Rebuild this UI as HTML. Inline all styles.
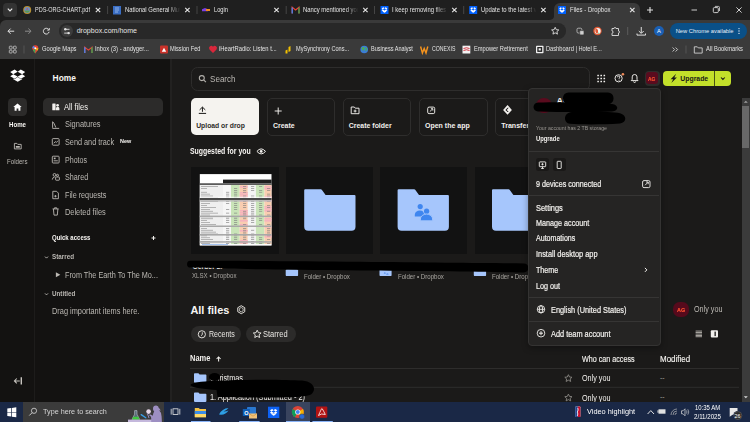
<!DOCTYPE html>
<html><head><meta charset="utf-8">
<style>
*{margin:0;padding:0;box-sizing:border-box}
html,body{width:750px;height:422px;overflow:hidden;background:#1b1a19;font-family:"Liberation Sans",sans-serif;position:relative}
.a{position:absolute}
.t{position:absolute;white-space:nowrap;line-height:10px;height:10px}
svg{position:absolute;overflow:visible}
</style></head><body>
<div class="a" style="left:0px;top:0px;width:750px;height:20px;background:#1f1f1f;"></div>
<div class="a" style="left:3px;top:3px;width:14px;height:13.5px;background:#333333;border-radius:4px;"></div>
<div class="a" style="left:554.4px;top:2.5px;width:85.8px;height:18px;background:#3a3a3a;border-radius:6px 6px 0 0;"></div>
<svg width="750" height="422" style="left:0;top:0">
 <path d="M548.5,20 Q554.4,20 554.4,14.5 L554.4,20 Z" fill="#3a3a3a"/>
 <path d="M646.1,20 Q640.2,20 640.2,14.5 L640.2,20 Z" fill="#3a3a3a"/>
 <path d="M7.8,8.6 L10,10.8 L12.2,8.6" stroke="#e8e8e8" stroke-width="1.2" fill="none"/>
 <g stroke="#4f4f4f" stroke-width="0.8">
  <line x1="107.6" y1="6" x2="107.6" y2="14"/><line x1="197" y1="6" x2="197" y2="14"/>
  <line x1="286.2" y1="6" x2="286.2" y2="14"/><line x1="374.5" y1="6" x2="374.5" y2="14"/>
  <line x1="463.7" y1="6" x2="463.7" y2="14"/>
 </g>
 <g stroke="#e2e2e2" stroke-width="1.15"><path d="M95.8,7.8 l4.4,4.4 M100.2,7.8 l-4.4,4.4"/><path d="M185.2,7.8 l4.4,4.4 M189.6,7.8 l-4.4,4.4"/><path d="M274.3,7.8 l4.4,4.4 M278.7,7.8 l-4.4,4.4"/><path d="M363.2,7.8 l4.4,4.4 M367.6,7.8 l-4.4,4.4"/><path d="M452.2,7.8 l4.4,4.4 M456.6,7.8 l-4.4,4.4"/><path d="M541.2,7.8 l4.4,4.4 M545.6,7.8 l-4.4,4.4"/><path d="M630.1,7.8 l4.4,4.4 M634.5,7.8 l-4.4,4.4"/></g>
 <path d="M650,7 v6 M647,10 h6" stroke="#e0e0e0" stroke-width="1.1"/>
 <path d="M691.5,10 h5.5" stroke="#e0e0e0" stroke-width="0.9"/>
 <rect x="713.3" y="7.6" width="5" height="5" rx="1" stroke="#e0e0e0" stroke-width="0.9" fill="none"/>
 <path d="M714.9,6.4 h3.5 a1.1,1.1 0 0 1 1.1,1.1 v3.5" stroke="#e0e0e0" stroke-width="0.8" fill="none"/>
 <path d="M736.4,7.4 l5.2,5.2 M741.6,7.4 l-5.2,5.2" stroke="#e0e0e0" stroke-width="0.9"/>
 <circle cx="27.2" cy="10" r="4" fill="#b8912e"/><circle cx="27.2" cy="10" r="3" fill="#6a8cc8"/><path d="M24.4,10.6 h5.6 a2.9,2.9 0 0 1 -5.6,0z" fill="#5a9a50"/><path d="M26,9.6 l1.2,-1.6 l1.2,1.6z" fill="#d05030"/>
 <rect x="113" y="6" width="8" height="8.5" fill="#3a6ec4"/><path d="M115,8 h4 M115,10 h4 M115,12 h3" stroke="#cfe0ff" stroke-width="0.6"/>
 <path d="M202,9.3 l3,-1.2 l3,1.2 v2 h-6z" fill="#7b3fe4"/><path d="M206,9 h4 v2 h-4z" fill="#f08a24"/>
 <path d="M292.2,13.5 v-6.3 l3.4,2.8 l3.4,-2.8 v6.3" fill="none" stroke="#ea4335" stroke-width="1.2"/><path d="M292.2,13.5 v-6" stroke="#4285f4" stroke-width="1.3"/><path d="M299,13.5 v-6" stroke="#34a853" stroke-width="1.3"/>
 <g fill="#0061fe"><rect x="380.5" y="6" width="8" height="8" rx="0.6"/><rect x="469.2" y="6" width="8" height="8" rx="0.6"/><rect x="558" y="6" width="8" height="8" rx="0.6"/></g>
<path transform="translate(381.60,7.32) scale(0.1429,0.1429)" d="M12 0 L0 7.7 L8.3 14.3 L20.3 6.9z M0 20.8 L12 28.5 L20.3 21.6 L8.3 14.3z M20.3 21.6 L28.6 28.5 L40.6 20.8 L32.3 14.3z M40.6 7.7 L28.6 0 L20.3 6.9 L32.3 14.3z M20.4 23.1 L12 30 L8.4 27.7 V30.3 L20.4 37.5 L32.4 30.3 V27.7 L28.8 30z" fill="#fff"/><path transform="translate(470.30,7.32) scale(0.1429,0.1429)" d="M12 0 L0 7.7 L8.3 14.3 L20.3 6.9z M0 20.8 L12 28.5 L20.3 21.6 L8.3 14.3z M20.3 21.6 L28.6 28.5 L40.6 20.8 L32.3 14.3z M40.6 7.7 L28.6 0 L20.3 6.9 L32.3 14.3z M20.4 23.1 L12 30 L8.4 27.7 V30.3 L20.4 37.5 L32.4 30.3 V27.7 L28.8 30z" fill="#fff"/><path transform="translate(559.10,7.32) scale(0.1429,0.1429)" d="M12 0 L0 7.7 L8.3 14.3 L20.3 6.9z M0 20.8 L12 28.5 L20.3 21.6 L8.3 14.3z M20.3 21.6 L28.6 28.5 L40.6 20.8 L32.3 14.3z M40.6 7.7 L28.6 0 L20.3 6.9 L32.3 14.3z M20.4 23.1 L12 30 L8.4 27.7 V30.3 L20.4 37.5 L32.4 30.3 V27.7 L28.8 30z" fill="#fff"/></svg>
<div class="t" style="left:34.90px;top:5.12px;font-size:7.16px;color:#e3e3e3;transform:scaleX(0.769);transform-origin:0 0;">PDS-ORG-CHART.pdf</div>
<div class="t" style="left:124.60px;top:5.31px;font-size:6.61px;color:#e3e3e3;transform:scaleX(0.893);transform-origin:0 0;width:62px;overflow:hidden;-webkit-mask-image:linear-gradient(90deg,#000 78%,transparent);">National General Mutual</div>
<div class="t" style="left:214.00px;top:5.38px;font-size:6.41px;color:#e3e3e3;transform:scaleX(0.893);transform-origin:0 0;">Login</div>
<div class="t" style="left:303.30px;top:5.31px;font-size:6.61px;color:#e3e3e3;transform:scaleX(0.893);transform-origin:0 0;width:62px;overflow:hidden;-webkit-mask-image:linear-gradient(90deg,#000 78%,transparent);">Nancy mentioned you</div>
<div class="t" style="left:392.30px;top:5.31px;font-size:6.61px;color:#e3e3e3;transform:scaleX(0.893);transform-origin:0 0;width:62px;overflow:hidden;-webkit-mask-image:linear-gradient(90deg,#000 78%,transparent);">I keep removing files</div>
<div class="t" style="left:480.80px;top:5.31px;font-size:6.61px;color:#e3e3e3;transform:scaleX(0.893);transform-origin:0 0;width:62px;overflow:hidden;-webkit-mask-image:linear-gradient(90deg,#000 78%,transparent);">Update to the latest version</div>
<div class="t" style="left:569.60px;top:5.28px;font-size:6.69px;color:#e3e3e3;transform:scaleX(0.893);transform-origin:0 0;">Files - Dropbox</div>
<div class="a" style="left:0px;top:19.5px;width:750px;height:39px;background:#3a3a3a;border-radius:6px 0 0 0;"></div>
<div class="a" style="left:58.8px;top:23px;width:507.6px;height:15.7px;background:#282828;border-radius:7.85px;"></div>
<div class="a" style="left:60.9px;top:25.1px;width:12.2px;height:12.2px;background:#3c3c3c;border-radius:50%;"></div>
<div class="t" style="left:76.70px;top:26.46px;font-size:7.06px;color:#e3e3e3;">dropbox.com/home</div>
<div class="a" style="left:669.5px;top:22.8px;width:77.5px;height:16.1px;background:#0a5088;border-radius:8px;"></div>
<div class="t" style="left:675.70px;top:26.21px;font-size:5.75px;color:#e6eef8;">New Chrome available</div>
<div class="a" style="left:653.8px;top:25.5px;width:10.1px;height:10.1px;background:#1a5fb4;border-radius:50%;"></div>
<div class="t" style="left:657.00px;top:25.99px;font-size:5.80px;color:#fff;">A</div>
<svg width="750" height="422" style="left:0;top:0">
 <g stroke="#e0e0e0" stroke-width="1" fill="none">
  <path d="M8,31.2 h6.2 M8,31.2 l2.6,-2.6 M8,31.2 l2.6,2.6"/>
  <path d="M31,31.2 h-6 M31,31.2 l-2.6,-2.6 M31,31.2 l-2.6,2.6" stroke="#8a8a8a"/>
  <path d="M48.7,29.6 a2.9,2.9 0 1 0 0.4,2.2"/>
  <path d="M49.3,28 v2.1 h-2.1" stroke-width="0.9"/>
  <path d="M64.2,29.3 h5.3 M64.2,33.1 h5.3" stroke-width="0.9"/>
  <path d="M555.2,27.3 l1.1,2.4 l2.5,0.25 l-1.9,1.7 l0.55,2.5 l-2.25,-1.3 l-2.25,1.3 l0.55,-2.5 l-1.9,-1.7 l2.5,-0.25z" stroke-width="0.9"/>
  <rect x="577" y="28.2" width="4.8" height="4.8" rx="1.2" stroke="#b8b8b8" stroke-width="0.9"/>
  <path d="M612,28.5 h2 a1,1 0 0 1 2,0 h2.5 v2.5 a1,1 0 0 1 0,2 v2.5 h-6.5 v-2.3 a1,1 0 0 0 0,-2.2z" stroke-width="0.9"/>
  <path d="M637,33.5 v1.6 h8.5 v-1.6 M641.25,27 v6 M638.8,31 l2.45,2.45 l2.45,-2.45" stroke-width="1"/>
 </g>
 <circle cx="65.3" cy="29.3" r="1.2" fill="#e0e0e0"/><circle cx="68.6" cy="33.1" r="1.2" fill="#e0e0e0"/>
 <rect x="579.7" y="30.6" width="4.3" height="4.3" rx="0.8" fill="#d0d0d0" stroke="#3a3a3a" stroke-width="0.7"/>
 <circle cx="597.5" cy="31" r="4.2" fill="#de5833"/><circle cx="597.7" cy="31" r="3" fill="#f4f4f4"/><path d="M595.6,28.6 q1.8,-0.2 2.4,1.6 q0.4,1.8 -0.6,3.6 q-1.6,-0.6 -2,-2.4 q-0.3,-1.6 0.2,-2.8z" fill="#de5833"/><path d="M597.6,33.2 l1.4,-0.6 l0.3,1.2z" fill="#4caf50"/>
 <line x1="627.7" y1="27" x2="627.7" y2="35" stroke="#666" stroke-width="0.8"/>
 <g fill="#e6eef8"><circle cx="739" cy="28.6" r="0.65"/><circle cx="739" cy="31" r="0.65"/><circle cx="739" cy="33.4" r="0.65"/></g>
 <g fill="none" stroke="#c8c8c8" stroke-width="0.8">
  <rect x="9.3" y="46.2" width="2.8" height="2.8" rx="0.6"/><rect x="13.4" y="46.2" width="2.8" height="2.8" rx="0.6"/>
  <rect x="9.3" y="50.2" width="2.8" height="2.8" rx="0.6"/><rect x="13.4" y="50.2" width="2.8" height="2.8" rx="0.6"/>
 </g>
 <line x1="24" y1="45.5" x2="24" y2="53.5" stroke="#5a5a5a" stroke-width="0.8"/>
 <path d="M35.3,53.5 q-3,-3.6 -3,-5.2 a3,3 0 0 1 6,0 q0,1.6 -3,5.2z" fill="#ea4335"/><path d="M32.3,48.3 a3,3 0 0 1 1.5,-2.6 l1.5,2.6z" fill="#4285f4"/><path d="M35.3,53.5 q-1.5,-1.8 -2.3,-3.2 l2.3,-2z" fill="#34a853"/><path d="M38.3,48.3 q0,1 -1,2.5 l-2,-2.5z" fill="#fbbc04"/><circle cx="35.3" cy="48.3" r="1" fill="#fff"/>
 <path d="M84.8,53 v-5.8 l3.6,2.9 l3.6,-2.9 v5.8" fill="none" stroke="#ea4335" stroke-width="1.2"/><path d="M84.8,53 v-5.8" stroke="#4285f4" stroke-width="1.3"/><path d="M92,53 v-5.8" stroke="#34a853" stroke-width="1.3"/>
 <rect x="160" y="45.5" width="8" height="8" rx="1" fill="#c8322a"/><path d="M161.8,51.8 l2.2,-4 l2.2,4z" fill="#fff"/>
 <path d="M213,53 l-3.5,-3.6 a2,2 0 0 1 3.5,-2.6 a2,2 0 0 1 3.5,2.6z" fill="#d8273b"/>
 <path d="M285.5,53.5 v-3 l2,-1 v4z M288.5,52 v-5 l2,-1 v5z" fill="#f3c100"/>
 <circle cx="364.2" cy="49.5" r="3.8" fill="#3b7dd8"/><path d="M361.5,48 q1.5,-1.5 3,-0.5 q0.5,1.5 -1,2.5 q-1,1 0,2.5" fill="#4caf50"/><path d="M365.5,47 q2,1 1.5,3 l-1.5,1.5z" fill="#4caf50"/>
 <path d="M420.6,46.5 l1.8,6.5 l1.8,-4.5 l1.8,4.5 l1.8,-6.5" fill="none" stroke="#f7941d" stroke-width="1.4"/>
 <rect x="462.5" y="45.7" width="7.8" height="7.8" fill="#f2f2f2"/><path d="M463.5,48.5 q3,-1.5 6,0 M463.5,50.5 q3,-1.5 6,0" stroke="#d0202e" stroke-width="0.9" fill="none"/>
 <rect x="536" y="45.7" width="7.5" height="7.5" rx="0.8" fill="#f0f0f0"/><rect x="537.3" y="47" width="4.9" height="4.9" fill="#222"/><rect x="538.6" y="48.3" width="2.2" height="2.2" fill="#f0f0f0"/>
 <path d="M672.6,47.5 l2,2 l-2,2 M675.6,47.5 l2,2 l-2,2" stroke="#d0d0d0" stroke-width="0.9" fill="none"/>
 <line x1="686" y1="45.5" x2="686" y2="53.5" stroke="#5a5a5a" stroke-width="0.8"/>
 <path d="M694.3,46.8 h3 l1,1.1 h3.9 v5.2 h-7.9z" stroke="#d0d0d0" stroke-width="0.9" fill="none"/>
</svg>
<div class="t" style="left:42.00px;top:44.18px;font-size:6.98px;color:#e3e3e3;transform:scaleX(0.833);transform-origin:0 0;">Google Maps</div>
<div class="t" style="left:95.20px;top:44.18px;font-size:7.00px;color:#e3e3e3;transform:scaleX(0.833);transform-origin:0 0;">Inbox (3) - andyger...</div>
<div class="t" style="left:170.40px;top:44.24px;font-size:6.81px;color:#e3e3e3;transform:scaleX(0.833);transform-origin:0 0;">Mission Fed</div>
<div class="t" style="left:219.30px;top:44.18px;font-size:7.00px;color:#e3e3e3;transform:scaleX(0.833);transform-origin:0 0;">iHeartRadio: Listen t...</div>
<div class="t" style="left:295.80px;top:44.27px;font-size:6.72px;color:#e3e3e3;transform:scaleX(0.833);transform-origin:0 0;">MySynchrony Cons...</div>
<div class="t" style="left:371.00px;top:44.29px;font-size:6.67px;color:#e3e3e3;transform:scaleX(0.833);transform-origin:0 0;">Business Analyst</div>
<div class="t" style="left:473.70px;top:44.21px;font-size:6.89px;color:#e3e3e3;transform:scaleX(0.833);transform-origin:0 0;">Empower Retirement</div>
<div class="t" style="left:546.40px;top:44.23px;font-size:6.84px;color:#e3e3e3;transform:scaleX(0.833);transform-origin:0 0;">Dashboard | Hotel E...</div>
<div class="t" style="left:706.00px;top:44.19px;font-size:6.95px;color:#e3e3e3;transform:scaleX(0.833);transform-origin:0 0;">All Bookmarks</div>
<div class="t" style="left:431.60px;top:44.11px;font-size:7.17px;color:#e3e3e3;transform:scaleX(0.725);transform-origin:0 0;">CONEXIS</div>
<div class="a" style="left:0px;top:58.5px;width:34px;height:344px;background:#131211;"></div>
<div class="a" style="left:33.5px;top:58.5px;width:2px;height:344px;background:#1d1c1b;"></div>
<div class="a" style="left:35px;top:58.5px;width:135px;height:344px;background:#131211;"></div>
<div class="a" style="left:169.8px;top:58.5px;width:2.2px;height:344px;background:#222120;"></div>
<div class="a" style="left:8px;top:97.6px;width:19px;height:18.5px;background:#2c2b2a;border-radius:4.5px;"></div>
<svg width="750" height="422" style="left:0;top:0"><path transform="translate(10.20,69.50) scale(0.3695,0.3251)" d="M12 0 L0 7.7 L8.3 14.3 L20.3 6.9z M0 20.8 L12 28.5 L20.3 21.6 L8.3 14.3z M20.3 21.6 L28.6 28.5 L40.6 20.8 L32.3 14.3z M40.6 7.7 L28.6 0 L20.3 6.9 L32.3 14.3z M20.4 23.1 L12 30 L8.4 27.7 V30.3 L20.4 37.5 L32.4 30.3 V27.7 L28.8 30z" fill="#fff"/>
 <path d="M17.5,103.4 l-4.2,3.5 h1.3 v3.8 h2 v-2.3 h1.8 v2.3 h2 v-3.8 h1.3z" fill="#fff"/>
 <path d="M14.4,143.4 h2.5 l0.9,1 h3.4 v4.5 h-6.8z" stroke="#bbb8b3" stroke-width="0.9" fill="none"/><path d="M15.8,146 h4 v1.8 h-4z" fill="#bbb8b3"/>
 <path d="M21.3,377.2 v7.4" stroke="#c8c5c0" stroke-width="1.4"/><path d="M19.8,380.9 h-5.4 M16.8,378.5 l-2.4,2.4 l2.4,2.4" stroke="#c8c5c0" stroke-width="1.05" fill="none"/>
</svg>
<div class="t" style="left:9.00px;top:119.57px;font-size:6.73px;color:#f7f5f2;font-weight:700;transform:scaleX(0.909);transform-origin:0 0;">Home</div>
<div class="t" style="left:7.20px;top:157.06px;font-size:6.76px;color:#bbb8b3;transform:scaleX(0.909);transform-origin:0 0;">Folders</div>
<div class="t" style="left:52.60px;top:73.48px;font-size:8.42px;color:#f7f5f2;font-weight:700;">Home</div>
<div class="a" style="left:43px;top:98px;width:120px;height:17.6px;background:#2c2b2a;border-radius:5px;"></div>
<svg width="750" height="422" style="left:0;top:0">
 <g fill="#f2f0ed"><rect x="52.3" y="103.6" width="3.3" height="6.6" rx="0.5"/><circle cx="57.6" cy="105.3" r="1.35"/><path d="M55.9,110.2 v-1.6 a1.75,1.75 0 0 1 3.5,0 v1.6z"/></g>
 <g fill="none" stroke="#bbb8b3" stroke-width="0.9">
  <path d="M52.6,127.8 v-6 l1.4,1.4 l1.8,4.3 M52.4,128.4 h6.8"/>
  <rect x="52.3" y="138.6" width="6.8" height="6.6" rx="0.8"/><path d="M53.8,143.2 l1.5,-1.6 l1.1,0.9 l1.6,-1.8"/>
  <rect x="52.3" y="156.2" width="6.8" height="6.8" rx="0.8"/><path d="M53.6,160.8 h4.2"/>
  <circle cx="54.5" cy="174.9" r="1.4"/><path d="M52.3,179.6 q0.2,-2.4 2.2,-2.4"/><rect x="55.6" y="177" width="3.8" height="3.2" rx="0.5"/><circle cx="57.5" cy="175.3" r="1"/>
  <path d="M52.8,191.3 h3.8 l1.8,1.8 v5.6 h-5.6z M54.3,196.2 h2.3 M55.45,195.05 v2.3"/>
  <path d="M52.6,208.9 h6 M54.5,208.7 v-0.9 h2.2 v0.9 M53.4,208.9 l0.6,6.2 h3.3 l0.6,-6.2"/>
  <path d="M45,256.6 l1.5,1.5 l1.5,-1.5" stroke-width="0.95"/>
  <path d="M45,293.4 l1.5,1.5 l1.5,-1.5" stroke-width="0.95"/>
 </g>
 <path d="M53.8,157.6 h1.8 v1.6 h-1.8z" fill="#bbb8b3"/>
 <path d="M151.5,238 h4 M153.5,236 v4" stroke="#f2f0ed" stroke-width="1"/>
 <path d="M55.9,272.3 l4.4,2.5 l-4.4,2.5z" fill="#bbb8b3"/>
</svg>
<div class="t" style="left:64.40px;top:102.03px;font-size:8.87px;color:#f7f5f2;transform:scaleX(0.855);transform-origin:0 0;">All files</div>
<div class="t" style="left:64.60px;top:119.48px;font-size:8.71px;color:#bbb8b3;transform:scaleX(0.855);transform-origin:0 0;">Signatures</div>
<div class="t" style="left:64.60px;top:137.07px;font-size:8.54px;color:#bbb8b3;transform:scaleX(0.855);transform-origin:0 0;">Send and track</div>
<div class="t" style="left:64.60px;top:154.68px;font-size:8.31px;color:#bbb8b3;transform:scaleX(0.855);transform-origin:0 0;">Photos</div>
<div class="t" style="left:64.60px;top:172.17px;font-size:8.42px;color:#bbb8b3;transform:scaleX(0.855);transform-origin:0 0;">Shared</div>
<div class="t" style="left:64.60px;top:189.68px;font-size:8.48px;color:#bbb8b3;transform:scaleX(0.855);transform-origin:0 0;">File requests</div>
<div class="t" style="left:64.60px;top:207.14px;font-size:8.67px;color:#bbb8b3;transform:scaleX(0.855);transform-origin:0 0;">Deleted files</div>
<div class="t" style="left:119.80px;top:135.52px;font-size:5.99px;color:#f7f5f2;font-weight:700;transform:scaleX(0.909);transform-origin:0 0;">New</div>
<div class="t" style="left:51.60px;top:233.01px;font-size:6.91px;color:#f7f5f2;font-weight:700;transform:scaleX(0.870);transform-origin:0 0;">Quick access</div>
<div class="t" style="left:52.00px;top:252.40px;font-size:7.23px;color:#bbb8b3;font-weight:700;transform:scaleX(0.870);transform-origin:0 0;">Starred</div>
<div class="t" style="left:65.30px;top:269.55px;font-size:8.50px;color:#bbb8b3;transform:scaleX(0.855);transform-origin:0 0;">From The Earth To The Mo...</div>
<div class="t" style="left:52.00px;top:289.11px;font-size:7.20px;color:#bbb8b3;font-weight:700;transform:scaleX(0.870);transform-origin:0 0;">Untitled</div>
<div class="t" style="left:52.00px;top:305.71px;font-size:8.63px;color:#bbb8b3;transform:scaleX(0.855);transform-origin:0 0;">Drag important items here.</div>
<div class="a" style="left:190.5px;top:66.6px;width:399px;height:24.2px;background:transparent;border-radius:6.5px;border:1.3px solid #2e2d2c;"></div>
<svg width="750" height="422" style="left:0;top:0"><circle cx="201.8" cy="78.1" r="2.5" stroke="#b5b2ad" stroke-width="1.05" fill="none"/><path d="M203.6,79.9 l2.3,2.3" stroke="#b5b2ad" stroke-width="1.15"/></svg>
<div class="t" style="left:209.60px;top:73.66px;font-size:9.05px;color:#bab7b2;transform:scaleX(0.893);transform-origin:0 0;">Search</div>
<svg width="750" height="422" style="left:0;top:0"><g fill="#f2f0ed"><rect x="597.3" y="74.7" width="1.6" height="1.6" rx="0.3"/><rect x="600.4" y="74.7" width="1.6" height="1.6" rx="0.3"/><rect x="603.5" y="74.7" width="1.6" height="1.6" rx="0.3"/><rect x="597.3" y="77.7" width="1.6" height="1.6" rx="0.3"/><rect x="600.4" y="77.7" width="1.6" height="1.6" rx="0.3"/><rect x="603.5" y="77.7" width="1.6" height="1.6" rx="0.3"/><rect x="597.3" y="80.7" width="1.6" height="1.6" rx="0.3"/><rect x="600.4" y="80.7" width="1.6" height="1.6" rx="0.3"/><rect x="603.5" y="80.7" width="1.6" height="1.6" rx="0.3"/></g>
 <circle cx="618.6" cy="78.3" r="3.6" stroke="#f2f0ed" stroke-width="0.95" fill="none"/>
 <path d="M617.4,77.3 a1.2,1.2 0 1 1 1.6,1.1 v0.7" stroke="#f2f0ed" stroke-width="0.85" fill="none"/><circle cx="619" cy="80.3" r="0.5" fill="#f2f0ed"/>
 <circle cx="622.9" cy="74.3" r="1.3" fill="#f08c5a"/>
 <path d="M631.2,80.6 h6.8 l-1,-1.2 v-2.5 a2.4,2.4 0 0 0 -4.8,0 v2.5z M633.6,81.5 a1,1 0 0 0 2,0" stroke="#f2f0ed" stroke-width="0.95" fill="none"/>
</svg>
<div class="a" style="left:644.5px;top:70.6px;width:15.3px;height:15.2px;background:#2e2d2c;border-radius:4px;"></div>
<div class="a" style="left:646.3px;top:72.4px;width:11.7px;height:11.6px;background:#5a0b1e;border-radius:3px;"></div>
<div class="t" style="left:648.40px;top:73.92px;font-size:5.43px;color:#ff5230;font-weight:700;transform:scaleX(0.909);transform-origin:0 0;-webkit-text-stroke:0.15px #ff5230;">AG</div>
<div class="a" style="left:663.2px;top:70.5px;width:68.3px;height:15.8px;background:#c3e02a;border-radius:4px;"></div>
<div class="a" style="left:714.1px;top:70.5px;width:0.8px;height:15.8px;background:#2a3010;opacity:0.8;"></div>
<svg width="750" height="422" style="left:0;top:0"><path d="M676.2,73.8 l-5.6,5.4 h2.6 l-1.9,3.8 l5.6,-5.4 h-2.6z" fill="#1a1918"/><path d="M721,77.5 l1.9,1.9 l1.9,-1.9" stroke="#1a1918" stroke-width="1.05" fill="none"/></svg>
<div class="t" style="left:680.30px;top:73.92px;font-size:6.88px;color:#1a1918;font-weight:700;">Upgrade</div>
<div class="a" style="left:190.5px;top:97.7px;width:68.5px;height:37.8px;background:#f5f3ef;border-radius:5px;"></div>
<div class="a" style="left:266.7px;top:98px;width:68.7px;height:37.5px;background:transparent;border-radius:5px;border:1px solid #2e2d2c;"></div>
<div class="a" style="left:342.8px;top:98px;width:68.2px;height:37.5px;background:transparent;border-radius:5px;border:1px solid #2e2d2c;"></div>
<div class="a" style="left:419.3px;top:98px;width:68.3px;height:37.5px;background:transparent;border-radius:5px;border:1px solid #2e2d2c;"></div>
<div class="a" style="left:495.3px;top:98px;width:68.5px;height:37.5px;background:transparent;border-radius:5px;border:1px solid #2e2d2c;"></div>
<svg width="750" height="422" style="left:0;top:0">
 <path d="M198.8,113.4 h7.3 M202.45,111.8 v-4.6 M199.6,109.9 l2.85,-2.8 l2.85,2.8" stroke="#1a1918" stroke-width="1" fill="none"/>
 <path d="M278.2,107.5 v7 M274.7,111 h7" stroke="#f2f0ed" stroke-width="0.95"/>
 <path d="M351.2,107 h3.1 l1,1.2 h3.7 v5.5 h-7.8z M355.1,109.6 v2.9 M353.65,111.05 h2.9" stroke="#f2f0ed" stroke-width="0.95" fill="none"/>
 <rect x="427.7" y="107.1" width="7" height="6.5" rx="1.4" stroke="#f2f0ed" stroke-width="0.95" fill="none"/><path d="M429.8,111.6 l2.9,-2.8 M430.9,108.7 h1.9 v1.9" stroke="#f2f0ed" stroke-width="0.9" fill="none"/>
 <path d="M507.5,105 l4.4,4.9 l-4.4,4.8 l-4.4,-4.8z" fill="#f2f0ed"/><path d="M505.4,109.9 l2.1,-2.2 l1.2,0 l-2,2.2 l2,2.2 l-1.2,0z" fill="#1a1918"/>
</svg>
<div class="t" style="left:196.20px;top:120.95px;font-size:6.80px;color:#2e2c2a;font-weight:700;">Upload or drop</div>
<div class="t" style="left:273.00px;top:120.88px;font-size:6.97px;color:#f2f0ed;font-weight:700;">Create</div>
<div class="t" style="left:348.80px;top:120.89px;font-size:6.95px;color:#f2f0ed;font-weight:700;">Create folder</div>
<div class="t" style="left:425.00px;top:120.88px;font-size:7.00px;color:#f2f0ed;font-weight:700;">Open the app</div>
<div class="t" style="left:501.20px;top:120.84px;font-size:7.10px;color:#f2f0ed;font-weight:700;">Transfer</div>
<div class="t" style="left:190.30px;top:146.02px;font-size:8.30px;color:#f7f5f2;font-weight:700;transform:scaleX(0.833);transform-origin:0 0;">Suggested for you</div>
<svg width="750" height="422" style="left:0;top:0"><path d="M256.9,151.4 q4.3,-5 8.6,0 q-4.3,5 -8.6,0z" stroke="#f2f0ed" stroke-width="1" fill="none"/><circle cx="261.2" cy="151.4" r="1.4" fill="#f2f0ed"/></svg>
<div class="a" style="left:191.4px;top:166.6px;width:87.6px;height:87.1px;background:#121212;"></div>
<div class="a" style="left:286.2px;top:166.6px;width:87.1px;height:87.1px;background:#121212;"></div>
<div class="a" style="left:380px;top:166.6px;width:87px;height:87.1px;background:#121212;"></div>
<div class="a" style="left:474.6px;top:166.6px;width:87px;height:87.1px;background:#121212;"></div>
<svg width="750" height="422" style="left:0;top:0"><rect x="199.8" y="174.1" width="71.69999999999999" height="71.30000000000001" fill="#ffffff"/><rect x="199.8" y="185" width="23.19999999999999" height="59.400000000000006" fill="#efefef"/><rect x="223" y="185" width="8" height="59.400000000000006" fill="#f6f6f6"/><rect x="231" y="185" width="8.699999999999989" height="59.2" fill="#c9e4b8"/><rect x="239.7" y="185" width="8.100000000000023" height="59.2" fill="#f9cdb0"/><rect x="247.8" y="185" width="8.099999999999994" height="59.2" fill="#f3f3f3"/><rect x="255.9" y="185" width="8.499999999999972" height="59.2" fill="#c9e4b8"/><rect x="264.4" y="185" width="7.100000000000023" height="59.2" fill="#f9cdb0"/><rect x="239.7" y="186" width="8.100000000000023" height="1.6" fill="#f5b3bd"/><rect x="264.4" y="186" width="7.100000000000023" height="1.6" fill="#f5b3bd"/><rect x="264.4" y="188" width="7.100000000000023" height="1.6" fill="#f5b3bd"/><rect x="239.7" y="192" width="8.100000000000023" height="1.6" fill="#f5b3bd"/><rect x="239.7" y="194" width="8.100000000000023" height="1.6" fill="#f5b3bd"/><rect x="239.7" y="196" width="8.100000000000023" height="1.6" fill="#f5b3bd"/><rect x="264.4" y="196" width="7.100000000000023" height="1.6" fill="#f5b3bd"/><rect x="239.7" y="200" width="8.100000000000023" height="1.6" fill="#f5b3bd"/><rect x="264.4" y="200" width="7.100000000000023" height="1.6" fill="#f5b3bd"/><rect x="264.4" y="206" width="7.100000000000023" height="1.6" fill="#f5b3bd"/><rect x="264.4" y="208" width="7.100000000000023" height="1.6" fill="#f5b3bd"/><rect x="239.7" y="210" width="8.100000000000023" height="1.6" fill="#f5b3bd"/><rect x="264.4" y="210" width="7.100000000000023" height="1.6" fill="#f5b3bd"/><rect x="239.7" y="212" width="8.100000000000023" height="1.6" fill="#f5b3bd"/><rect x="239.7" y="214" width="8.100000000000023" height="1.6" fill="#f5b3bd"/><rect x="264.4" y="218" width="7.100000000000023" height="1.6" fill="#f5b3bd"/><rect x="239.7" y="220" width="8.100000000000023" height="1.6" fill="#f5b3bd"/><rect x="264.4" y="220" width="7.100000000000023" height="1.6" fill="#f5b3bd"/><rect x="239.7" y="224" width="8.100000000000023" height="1.6" fill="#f5b3bd"/><rect x="264.4" y="226" width="7.100000000000023" height="1.6" fill="#f5b3bd"/><rect x="239.7" y="230" width="8.100000000000023" height="1.6" fill="#f5b3bd"/><rect x="264.4" y="234" width="7.100000000000023" height="1.6" fill="#f5b3bd"/><rect x="264.4" y="236" width="7.100000000000023" height="1.6" fill="#f5b3bd"/><rect x="239.7" y="240" width="8.100000000000023" height="1.6" fill="#f5b3bd"/><rect x="239.7" y="242" width="8.100000000000023" height="1.6" fill="#f5b3bd"/><rect x="201" y="186.2" width="17" height="0.6" fill="#8a8a8a"/><rect x="243" y="186.2" width="3.2" height="0.6" fill="#7a7a7a"/><rect x="251" y="186.2" width="3.2" height="0.6" fill="#7a7a7a"/><rect x="259" y="186.2" width="3.2" height="0.6" fill="#7a7a7a"/><rect x="201" y="188.1" width="6" height="0.6" fill="#8a8a8a"/><rect x="234" y="188.1" width="3.2" height="0.6" fill="#7a7a7a"/><rect x="243" y="188.1" width="3.2" height="0.6" fill="#7a7a7a"/><rect x="251" y="188.1" width="3.2" height="0.6" fill="#7a7a7a"/><rect x="267" y="188.1" width="3.2" height="0.6" fill="#7a7a7a"/><rect x="234" y="190.0" width="3.2" height="0.6" fill="#7a7a7a"/><rect x="243" y="190.0" width="3.2" height="0.6" fill="#7a7a7a"/><rect x="251" y="190.0" width="3.2" height="0.6" fill="#7a7a7a"/><rect x="259" y="190.0" width="3.2" height="0.6" fill="#7a7a7a"/><rect x="267" y="190.0" width="3.2" height="0.6" fill="#7a7a7a"/><rect x="201" y="191.9" width="6" height="0.6" fill="#8a8a8a"/><rect x="226" y="191.9" width="3.2" height="0.6" fill="#7a7a7a"/><rect x="234" y="191.9" width="3.2" height="0.6" fill="#7a7a7a"/><rect x="243" y="191.9" width="3.2" height="0.6" fill="#7a7a7a"/><rect x="259" y="191.9" width="3.2" height="0.6" fill="#7a7a7a"/><rect x="201" y="193.8" width="9" height="0.6" fill="#8a8a8a"/><rect x="226" y="193.8" width="3.2" height="0.6" fill="#7a7a7a"/><rect x="234" y="193.8" width="3.2" height="0.6" fill="#7a7a7a"/><rect x="267" y="193.8" width="3.2" height="0.6" fill="#7a7a7a"/><rect x="201" y="195.7" width="12" height="0.6" fill="#8a8a8a"/><rect x="226" y="195.7" width="3.2" height="0.6" fill="#7a7a7a"/><rect x="234" y="195.7" width="3.2" height="0.6" fill="#7a7a7a"/><rect x="243" y="195.7" width="3.2" height="0.6" fill="#7a7a7a"/><rect x="251" y="195.7" width="3.2" height="0.6" fill="#7a7a7a"/><rect x="259" y="195.7" width="3.2" height="0.6" fill="#7a7a7a"/><rect x="267" y="195.7" width="3.2" height="0.6" fill="#7a7a7a"/><rect x="201" y="197.6" width="17" height="0.6" fill="#8a8a8a"/><rect x="226" y="197.6" width="3.2" height="0.6" fill="#7a7a7a"/><rect x="234" y="197.6" width="3.2" height="0.6" fill="#7a7a7a"/><rect x="243" y="197.6" width="3.2" height="0.6" fill="#7a7a7a"/><rect x="251" y="197.6" width="3.2" height="0.6" fill="#7a7a7a"/><rect x="259" y="197.6" width="3.2" height="0.6" fill="#7a7a7a"/><rect x="267" y="197.6" width="3.2" height="0.6" fill="#7a7a7a"/><rect x="201" y="199.5" width="17" height="0.6" fill="#8a8a8a"/><rect x="234" y="199.5" width="3.2" height="0.6" fill="#7a7a7a"/><rect x="251" y="199.5" width="3.2" height="0.6" fill="#7a7a7a"/><rect x="201" y="201.4" width="17" height="0.6" fill="#8a8a8a"/><rect x="226" y="201.4" width="3.2" height="0.6" fill="#7a7a7a"/><rect x="234" y="201.4" width="3.2" height="0.6" fill="#7a7a7a"/><rect x="243" y="201.4" width="3.2" height="0.6" fill="#7a7a7a"/><rect x="251" y="201.4" width="3.2" height="0.6" fill="#7a7a7a"/><rect x="259" y="201.4" width="3.2" height="0.6" fill="#7a7a7a"/><rect x="267" y="201.4" width="3.2" height="0.6" fill="#7a7a7a"/><rect x="201" y="203.3" width="9" height="0.6" fill="#8a8a8a"/><rect x="226" y="203.3" width="3.2" height="0.6" fill="#7a7a7a"/><rect x="234" y="203.3" width="3.2" height="0.6" fill="#7a7a7a"/><rect x="243" y="203.3" width="3.2" height="0.6" fill="#7a7a7a"/><rect x="251" y="203.3" width="3.2" height="0.6" fill="#7a7a7a"/><rect x="259" y="203.3" width="3.2" height="0.6" fill="#7a7a7a"/><rect x="201" y="205.2" width="6" height="0.6" fill="#8a8a8a"/><rect x="234" y="205.2" width="3.2" height="0.6" fill="#7a7a7a"/><rect x="243" y="205.2" width="3.2" height="0.6" fill="#7a7a7a"/><rect x="251" y="205.2" width="3.2" height="0.6" fill="#7a7a7a"/><rect x="259" y="205.2" width="3.2" height="0.6" fill="#7a7a7a"/><rect x="267" y="205.2" width="3.2" height="0.6" fill="#7a7a7a"/><rect x="201" y="207.1" width="15" height="0.6" fill="#8a8a8a"/><rect x="234" y="207.1" width="3.2" height="0.6" fill="#7a7a7a"/><rect x="243" y="207.1" width="3.2" height="0.6" fill="#7a7a7a"/><rect x="251" y="207.1" width="3.2" height="0.6" fill="#7a7a7a"/><rect x="259" y="207.1" width="3.2" height="0.6" fill="#7a7a7a"/><rect x="267" y="207.1" width="3.2" height="0.6" fill="#7a7a7a"/><rect x="201" y="209.0" width="9" height="0.6" fill="#8a8a8a"/><rect x="226" y="209.0" width="3.2" height="0.6" fill="#7a7a7a"/><rect x="234" y="209.0" width="3.2" height="0.6" fill="#7a7a7a"/><rect x="251" y="209.0" width="3.2" height="0.6" fill="#7a7a7a"/><rect x="259" y="209.0" width="3.2" height="0.6" fill="#7a7a7a"/><rect x="201" y="210.9" width="12" height="0.6" fill="#8a8a8a"/><rect x="243" y="210.9" width="3.2" height="0.6" fill="#7a7a7a"/><rect x="251" y="210.9" width="3.2" height="0.6" fill="#7a7a7a"/><rect x="259" y="210.9" width="3.2" height="0.6" fill="#7a7a7a"/><rect x="267" y="210.9" width="3.2" height="0.6" fill="#7a7a7a"/><rect x="201" y="212.8" width="17" height="0.6" fill="#8a8a8a"/><rect x="226" y="212.8" width="3.2" height="0.6" fill="#7a7a7a"/><rect x="234" y="212.8" width="3.2" height="0.6" fill="#7a7a7a"/><rect x="243" y="212.8" width="3.2" height="0.6" fill="#7a7a7a"/><rect x="251" y="212.8" width="3.2" height="0.6" fill="#7a7a7a"/><rect x="201" y="214.7" width="9" height="0.6" fill="#8a8a8a"/><rect x="243" y="214.7" width="3.2" height="0.6" fill="#7a7a7a"/><rect x="251" y="214.7" width="3.2" height="0.6" fill="#7a7a7a"/><rect x="259" y="214.7" width="3.2" height="0.6" fill="#7a7a7a"/><rect x="267" y="214.7" width="3.2" height="0.6" fill="#7a7a7a"/><rect x="201" y="216.6" width="12" height="0.6" fill="#8a8a8a"/><rect x="226" y="216.6" width="3.2" height="0.6" fill="#7a7a7a"/><rect x="234" y="216.6" width="3.2" height="0.6" fill="#7a7a7a"/><rect x="243" y="216.6" width="3.2" height="0.6" fill="#7a7a7a"/><rect x="251" y="216.6" width="3.2" height="0.6" fill="#7a7a7a"/><rect x="201" y="218.5" width="12" height="0.6" fill="#8a8a8a"/><rect x="226" y="218.5" width="3.2" height="0.6" fill="#7a7a7a"/><rect x="234" y="218.5" width="3.2" height="0.6" fill="#7a7a7a"/><rect x="243" y="218.5" width="3.2" height="0.6" fill="#7a7a7a"/><rect x="251" y="218.5" width="3.2" height="0.6" fill="#7a7a7a"/><rect x="259" y="218.5" width="3.2" height="0.6" fill="#7a7a7a"/><rect x="201" y="220.4" width="6" height="0.6" fill="#8a8a8a"/><rect x="226" y="220.4" width="3.2" height="0.6" fill="#7a7a7a"/><rect x="234" y="220.4" width="3.2" height="0.6" fill="#7a7a7a"/><rect x="251" y="220.4" width="3.2" height="0.6" fill="#7a7a7a"/><rect x="259" y="220.4" width="3.2" height="0.6" fill="#7a7a7a"/><rect x="201" y="222.3" width="9" height="0.6" fill="#8a8a8a"/><rect x="226" y="222.3" width="3.2" height="0.6" fill="#7a7a7a"/><rect x="234" y="222.3" width="3.2" height="0.6" fill="#7a7a7a"/><rect x="251" y="222.3" width="3.2" height="0.6" fill="#7a7a7a"/><rect x="201" y="224.2" width="15" height="0.6" fill="#8a8a8a"/><rect x="234" y="224.2" width="3.2" height="0.6" fill="#7a7a7a"/><rect x="243" y="224.2" width="3.2" height="0.6" fill="#7a7a7a"/><rect x="259" y="224.2" width="3.2" height="0.6" fill="#7a7a7a"/><rect x="267" y="224.2" width="3.2" height="0.6" fill="#7a7a7a"/><rect x="201" y="226.1" width="9" height="0.6" fill="#8a8a8a"/><rect x="226" y="226.1" width="3.2" height="0.6" fill="#7a7a7a"/><rect x="234" y="226.1" width="3.2" height="0.6" fill="#7a7a7a"/><rect x="243" y="226.1" width="3.2" height="0.6" fill="#7a7a7a"/><rect x="259" y="226.1" width="3.2" height="0.6" fill="#7a7a7a"/><rect x="267" y="226.1" width="3.2" height="0.6" fill="#7a7a7a"/><rect x="201" y="228.0" width="6" height="0.6" fill="#8a8a8a"/><rect x="226" y="228.0" width="3.2" height="0.6" fill="#7a7a7a"/><rect x="243" y="228.0" width="3.2" height="0.6" fill="#7a7a7a"/><rect x="267" y="228.0" width="3.2" height="0.6" fill="#7a7a7a"/><rect x="201" y="229.9" width="12" height="0.6" fill="#8a8a8a"/><rect x="226" y="229.9" width="3.2" height="0.6" fill="#7a7a7a"/><rect x="243" y="229.9" width="3.2" height="0.6" fill="#7a7a7a"/><rect x="251" y="229.9" width="3.2" height="0.6" fill="#7a7a7a"/><rect x="267" y="229.9" width="3.2" height="0.6" fill="#7a7a7a"/><rect x="201" y="231.8" width="15" height="0.6" fill="#8a8a8a"/><rect x="226" y="231.8" width="3.2" height="0.6" fill="#7a7a7a"/><rect x="243" y="231.8" width="3.2" height="0.6" fill="#7a7a7a"/><rect x="267" y="231.8" width="3.2" height="0.6" fill="#7a7a7a"/><rect x="201" y="233.7" width="17" height="0.6" fill="#8a8a8a"/><rect x="226" y="233.7" width="3.2" height="0.6" fill="#7a7a7a"/><rect x="234" y="233.7" width="3.2" height="0.6" fill="#7a7a7a"/><rect x="243" y="233.7" width="3.2" height="0.6" fill="#7a7a7a"/><rect x="251" y="233.7" width="3.2" height="0.6" fill="#7a7a7a"/><rect x="267" y="233.7" width="3.2" height="0.6" fill="#7a7a7a"/><rect x="201" y="235.6" width="6" height="0.6" fill="#8a8a8a"/><rect x="226" y="235.6" width="3.2" height="0.6" fill="#7a7a7a"/><rect x="234" y="235.6" width="3.2" height="0.6" fill="#7a7a7a"/><rect x="243" y="235.6" width="3.2" height="0.6" fill="#7a7a7a"/><rect x="251" y="235.6" width="3.2" height="0.6" fill="#7a7a7a"/><rect x="267" y="235.6" width="3.2" height="0.6" fill="#7a7a7a"/><rect x="201" y="237.5" width="9" height="0.6" fill="#8a8a8a"/><rect x="226" y="237.5" width="3.2" height="0.6" fill="#7a7a7a"/><rect x="234" y="237.5" width="3.2" height="0.6" fill="#7a7a7a"/><rect x="243" y="237.5" width="3.2" height="0.6" fill="#7a7a7a"/><rect x="251" y="237.5" width="3.2" height="0.6" fill="#7a7a7a"/><rect x="259" y="237.5" width="3.2" height="0.6" fill="#7a7a7a"/><rect x="201" y="239.4" width="12" height="0.6" fill="#8a8a8a"/><rect x="226" y="239.4" width="3.2" height="0.6" fill="#7a7a7a"/><rect x="234" y="239.4" width="3.2" height="0.6" fill="#7a7a7a"/><rect x="243" y="239.4" width="3.2" height="0.6" fill="#7a7a7a"/><rect x="251" y="239.4" width="3.2" height="0.6" fill="#7a7a7a"/><rect x="259" y="239.4" width="3.2" height="0.6" fill="#7a7a7a"/><rect x="267" y="239.4" width="3.2" height="0.6" fill="#7a7a7a"/><rect x="201" y="241.3" width="9" height="0.6" fill="#8a8a8a"/><rect x="226" y="241.3" width="3.2" height="0.6" fill="#7a7a7a"/><rect x="251" y="241.3" width="3.2" height="0.6" fill="#7a7a7a"/><rect x="259" y="241.3" width="3.2" height="0.6" fill="#7a7a7a"/><rect x="201" y="243.2" width="9" height="0.6" fill="#8a8a8a"/><rect x="226" y="243.2" width="3.2" height="0.6" fill="#7a7a7a"/><rect x="234" y="243.2" width="3.2" height="0.6" fill="#7a7a7a"/><rect x="243" y="243.2" width="3.2" height="0.6" fill="#7a7a7a"/><rect x="251" y="243.2" width="3.2" height="0.6" fill="#7a7a7a"/><rect x="259" y="243.2" width="3.2" height="0.6" fill="#7a7a7a"/><rect x="267" y="243.2" width="3.2" height="0.6" fill="#7a7a7a"/><rect x="199.8" y="196.8" width="71.69999999999999" height="0.9" fill="#ffffff"/><rect x="199.8" y="198" width="71.69999999999999" height="2.2" fill="#4a4a4a"/><rect x="199.8" y="200.2" width="71.69999999999999" height="1.4" fill="#bdbdbd"/><rect x="199.8" y="215.6" width="71.69999999999999" height="1.5" fill="#a8a8a8"/><rect x="199.8" y="225.5" width="71.69999999999999" height="1.5" fill="#a8a8a8"/><rect x="199.8" y="234" width="71.69999999999999" height="1.6" fill="#a8a8a8"/><rect x="199.8" y="241.2" width="71.69999999999999" height="1.5" fill="#a8a8a8"/><rect x="223" y="179.6" width="48.5" height="3.7" fill="#1e1e1e"/><rect x="199.8" y="183.3" width="71.69999999999999" height="1.6" fill="#4a4a4a"/><rect x="199.8" y="244.2" width="71.69999999999999" height="1.2" fill="#ffffff"/><rect x="202" y="244.4" width="26" height="0.6" fill="#6d9eeb"/>
 <path d="M304.2,190.2 a1,1 0 0 1 1,-1 h15.6 q0.6,0 1,0.5 l3.8,5.2 h28.9 a1,1 0 0 1 1,1 v30.9 a4,4 0 0 1 -4,4 h-43.3 a4,4 0 0 1 -4,-4z" fill="#a6c6fc"/>
 <path transform="translate(93.4,0)" d="M304.2,190.2 a1,1 0 0 1 1,-1 h15.6 q0.6,0 1,0.5 l3.8,5.2 h28.9 a1,1 0 0 1 1,1 v30.9 a4,4 0 0 1 -4,4 h-43.3 a4,4 0 0 1 -4,-4z" fill="#a6c6fc"/>
 <path transform="translate(187.8,0)" d="M304.2,190.2 a1,1 0 0 1 1,-1 h15.6 q0.6,0 1,0.5 l3.8,5.2 h28.9 a1,1 0 0 1 1,1 v30.9 a4,4 0 0 1 -4,4 h-43.3 a4,4 0 0 1 -4,-4z" fill="#a6c6fc"/>
 <g fill="#3f86ef">
  <circle cx="420.2" cy="206.6" r="2.6"/><path d="M414.8,216.4 v-1.6 a5,4.2 0 0 1 10,0 v1.6z"/>
  <circle cx="426.6" cy="211.2" r="3.3" fill="#a6c6fc"/><circle cx="426.6" cy="211.2" r="2.6"/>
  <path d="M420.4,220.8 v-1.8 a6.1,4.9 0 0 1 12.2,0 v1.8z" stroke="#a6c6fc" stroke-width="0.9"/>
 </g>
 <rect x="285.7" y="269.4" width="12.4" height="6.7" rx="1.2" fill="#a6c6fc"/>
 <rect x="379.5" y="269.4" width="12.1" height="6.7" rx="1.2" fill="#a6c6fc"/>
 <path d="M383.8,273.6 a1,1 0 0 1 2,0 z M386.2,274.6 a1.2,1.2 0 0 1 2.4,0z" fill="#3b7ce6"/>
 <rect x="473.8" y="269.4" width="12.3" height="6.7" rx="1.2" fill="#a6c6fc"/>
</svg>
<div class="t" style="left:192.50px;top:261.84px;font-size:6.80px;color:#e8e6e2;font-weight:700;">Gerber 2.</div>
<div class="t" style="left:192.00px;top:271.34px;font-size:7.68px;color:#a9a6a1;transform:scaleX(0.800);transform-origin:0 0;">XLSX • Dropbox</div>
<div class="t" style="left:303.70px;top:271.96px;font-size:7.63px;color:#a9a6a1;transform:scaleX(0.800);transform-origin:0 0;">Folder • Dropbox</div>
<div class="t" style="left:397.60px;top:271.96px;font-size:7.63px;color:#a9a6a1;transform:scaleX(0.800);transform-origin:0 0;">Folder • Dropbox</div>
<div class="t" style="left:491.80px;top:271.96px;font-size:7.63px;color:#a9a6a1;transform:scaleX(0.800);transform-origin:0 0;">Folder • Dropbox</div>
<svg width="750" height="422" style="left:0;top:0"><path d="M190.5,260.7 C250,260.8 300,261 360,261.8 C430,262.6 490,263.1 524,263.4 A4.5,4.5 0 0 1 524,272.4 C490,271.8 420,271 360,270.4 C300,269.8 250,269.4 228,268.6 C215,268 200,267.8 190.5,267.6 A3.45,3.45 0 0 1 190.5,260.7z" fill="#000"/></svg>
<div class="t" style="left:190.40px;top:304.91px;font-size:10.94px;color:#f7f5f2;font-weight:700;">All files</div>
<svg width="750" height="422" style="left:0;top:0"><path d="M241.25,305.7 l3.5,2 v4 l-3.5,2 l-3.5,-2 v-4z" stroke="#e0ddd8" stroke-width="1" fill="none"/><path d="M241.25,307.5 l1.9,1.1 v2.2 l-1.9,1.1 l-1.9,-1.1 v-2.2z" stroke="#e0ddd8" stroke-width="0.8" fill="none"/></svg>
<div class="a" style="left:190.6px;top:326.1px;width:50.9px;height:16px;background:#2c2b2a;border-radius:8px;"></div>
<div class="a" style="left:245.6px;top:326.1px;width:50.1px;height:16px;background:#2c2b2a;border-radius:8px;"></div>
<svg width="750" height="422" style="left:0;top:0">
 <circle cx="201.85" cy="334.3" r="3.6" stroke="#e8e6e2" stroke-width="0.95" fill="none"/><path d="M202.3,332.3 v2.3 l-1.3,1.1" stroke="#e8e6e2" stroke-width="0.9" fill="none"/>
 <path d="M257.2,330.2 l1.2,2.5 l2.7,0.3 l-2,1.85 l0.55,2.7 l-2.45,-1.4 l-2.45,1.4 l0.55,-2.7 l-2,-1.85 l2.7,-0.3z" stroke="#e8e6e2" stroke-width="0.95" fill="none"/>
 <path d="M218.6,361.4 v-4.4 M216.6,359 l2,-2 l2,2" stroke="#f2f0ed" stroke-width="1.05" fill="none"/>
 <line x1="190" y1="368.5" x2="739" y2="368.5" stroke="#2e2d2c" stroke-width="1"/>
 <line x1="190" y1="387.3" x2="739" y2="387.3" stroke="#2e2d2c" stroke-width="1"/>

 <path d="M194,374 a0.8,0.8 0 0 1 0.8,-0.8 h3.6 l1.2,1.3 h6 a0.8,0.8 0 0 1 0.8,0.8 v6.5 a1,1 0 0 1 -1,1 h-10.4 a1,1 0 0 1 -1,-1z" fill="#a6c6fc"/>
 <path d="M194,393.3 a0.8,0.8 0 0 1 0.8,-0.8 h3.6 l1.2,1.3 h6 a0.8,0.8 0 0 1 0.8,0.8 v6.5 a1,1 0 0 1 -1,1 h-10.4 a1,1 0 0 1 -1,-1z" fill="#a6c6fc"/>
 <g stroke="#8e8b87" stroke-width="0.85" fill="none">
  <path d="M568.4,374.7 l1.1,2.3 l2.5,0.28 l-1.85,1.7 l0.5,2.5 l-2.25,-1.3 l-2.25,1.3 l0.5,-2.5 l-1.85,-1.7 l2.5,-0.28z"/>
  <path d="M568.4,394.1 l1.1,2.3 l2.5,0.28 l-1.85,1.7 l0.5,2.5 l-2.25,-1.3 l-2.25,1.3 l0.5,-2.5 l-1.85,-1.7 l2.5,-0.28z"/>
 </g>
</svg>
<div class="t" style="left:208.50px;top:329.95px;font-size:8.23px;color:#e8e6e2;transform:scaleX(0.855);transform-origin:0 0;">Recents</div>
<div class="t" style="left:263.20px;top:329.16px;font-size:8.78px;color:#e8e6e2;transform:scaleX(0.855);transform-origin:0 0;">Starred</div>
<div class="t" style="left:190.30px;top:353.48px;font-size:8.72px;color:#f2f0ed;font-weight:700;transform:scaleX(0.855);transform-origin:0 0;">Name</div>
<div class="t" style="left:581.80px;top:353.91px;font-size:8.62px;color:#f2f0ed;transform:scaleX(0.833);transform-origin:0 0;-webkit-text-stroke:0.15px #f2f0ed;">Who can access</div>
<div class="t" style="left:659.80px;top:353.85px;font-size:8.79px;color:#f2f0ed;transform:scaleX(0.909);transform-origin:0 0;-webkit-text-stroke:0.15px #f2f0ed;">Modified</div>
<div class="t" style="left:210.00px;top:372.63px;font-size:8.58px;color:#f2f0ed;transform:scaleX(0.855);transform-origin:0 0;">Christmas</div>
<div class="t" style="left:581.80px;top:373.37px;font-size:8.45px;color:#f2f0ed;transform:scaleX(0.855);transform-origin:0 0;">Only you</div>
<div class="t" style="left:660.00px;top:373.07px;font-size:7.00px;color:#a9a6a1;">--</div>
<div class="t" style="left:210.00px;top:392.20px;font-size:8.66px;color:#f2f0ed;transform:scaleX(0.855);transform-origin:0 0;">1. Application (Submitted - 2)</div>
<div class="t" style="left:581.80px;top:392.77px;font-size:8.45px;color:#f2f0ed;transform:scaleX(0.855);transform-origin:0 0;">Only you</div>
<div class="t" style="left:660.00px;top:392.47px;font-size:7.00px;color:#a9a6a1;">--</div>
<svg width="750" height="422" style="left:0;top:0"><path d="M190.5,385 C192,382.5 200,381.8 215,380.8 C250,379.2 285,379.4 302,380.6 C314,381.6 317,390 311,394.5 C305,397.8 280,397.6 250,397.4 C232,397.4 222,397.2 217.5,397 L216.5,390 C205,389.2 192,388 190.5,385z" fill="#000"/>
 <ellipse cx="214.6" cy="377" rx="5.6" ry="4" fill="#000"/></svg>
<div class="a" style="left:673px;top:301.9px;width:15.7px;height:15.4px;background:#560a1c;border-radius:6.5px;"></div>
<div class="t" style="left:676.80px;top:305.12px;font-size:6.01px;color:#ff5230;font-weight:700;transform:scaleX(0.909);transform-origin:0 0;-webkit-text-stroke:0.2px #ff5230;">AG</div>
<div class="t" style="left:693.70px;top:304.17px;font-size:8.45px;color:#bdbab5;transform:scaleX(0.855);transform-origin:0 0;">Only you</div>
<svg width="750" height="422" style="left:0;top:0"><g fill="#b5b1ac"><rect x="695.6" y="330.6" width="6.4" height="0.9"/><rect x="695.6" y="332.1" width="6.4" height="0.9"/><rect x="695.6" y="333.6" width="6.4" height="0.9"/><rect x="695.6" y="335.1" width="6.4" height="0.9"/><rect x="695.6" y="336.3" width="6.4" height="0.9"/></g>
 <rect x="710.8" y="330.3" width="7.2" height="7.1" rx="1" fill="#f2f0ed"/><rect x="714.5" y="331.6" width="1.3" height="4.5" fill="#1b1a19"/></svg>
<div class="a" style="left:741.5px;top:97.8px;width:8.5px;height:304.2px;background:#3b3b3b;"></div>
<div class="a" style="left:742.4px;top:105.8px;width:7.1px;height:42.2px;background:#686868;"></div>
<svg width="750" height="422" style="left:0;top:0"><path d="M743.8,102.8 l2,-2 l2,2z" fill="#a0a0a0"/><path d="M743.8,396.2 l2,2 l2,-2z" fill="#d8d8d8"/></svg>
<div class="a" style="left:527.6px;top:88.3px;width:133px;height:257.6px;background:#252423;border-radius:4px;border:1px solid #343332;box-shadow:0 2px 6px rgba(0,0,0,.35);"></div>
<div class="a" style="left:536.1px;top:97.5px;width:16.1px;height:15.5px;background:#5a0b1e;border-radius:50%;"></div>
<div class="t" style="left:556.60px;top:95.68px;font-size:9.00px;color:#f7f5f2;font-weight:700;">An</div>
<svg width="750" height="422" style="left:0;top:0"><path d="M568.5,92.4 h39.5 a5.5,5.5 0 0 1 5.5,5.5 v0.8 a5.5,5.5 0 0 1 -5.5,5.5 h-39.5 a5.5,5.5 0 0 1 -5.5,-6 v-0 a5.5,5.5 0 0 1 5.5,-5.8z" fill="#000"/>
 <path d="M538,102.6 C560,101.8 598,102.3 612,104 C619,105 619,110.8 612,111.5 C590,112.6 560,112.2 538,111.6 C532,111 532,103.2 538,102.6z" fill="#000"/>
 <path d="M572,111.9 C590,111.2 612,111.6 620,113.2 C627,115.2 627,122 620,123.6 C600,124.8 580,124.6 570,123.8 C563,122.8 563,112.6 572,111.9z" fill="#000"/></svg>
<div class="t" style="left:535.80px;top:122.62px;font-size:5.71px;color:#9a9792;transform:scaleX(0.909);transform-origin:0 0;">Your account has 2 TB storage</div>
<div class="t" style="left:535.80px;top:134.23px;font-size:6.84px;color:#f2f0ed;font-weight:700;transform:scaleX(0.855);transform-origin:0 0;">Upgrade</div>
<div class="a" style="left:528.6px;top:150.6px;width:130.7px;height:0.9px;background:#363534;"></div>
<div class="a" style="left:536px;top:158.4px;width:13px;height:13px;background:#1a1918;border-radius:2.5px;"></div>
<div class="a" style="left:552.7px;top:158.4px;width:13px;height:13px;background:#1a1918;border-radius:2.5px;"></div>
<svg width="750" height="422" style="left:0;top:0"><g stroke="#f2f0ed" stroke-width="0.9" fill="none">
  <rect x="539.3" y="161.9" width="6.4" height="4.8" rx="0.5"/><path d="M541.2,168.5 h2.6 M542.5,166.7 v1.8 M541.4,164.3 h2.2 M542.5,163.2 v2.2"/>
  <rect x="557.2" y="161.3" width="4" height="7.2" rx="0.5"/>
  <rect x="642.6" y="180.6" width="7.4" height="7" rx="1.4"/>
  <path d="M645.1,185.2 l3,-3 M646,182 h2.2 v2.2"/>
  <path d="M644.9,267.9 l2,2 l-2,2" stroke-width="1"/>
  <circle cx="541" cy="309.3" r="3.7"/><ellipse cx="541" cy="309.3" rx="1.6" ry="3.7"/><path d="M537.3,309.3 h7.4"/>
  <circle cx="541" cy="333.2" r="3.8"/><path d="M541,331.2 v4 M539,333.2 h4" stroke-width="1"/>
 </g></svg>
<div class="t" style="left:535.90px;top:179.19px;font-size:8.39px;color:#f2f0ed;transform:scaleX(0.855);transform-origin:0 0;-webkit-text-stroke:0.2px #f2f0ed;">9 devices connected</div>
<div class="a" style="left:528.6px;top:194.8px;width:130.7px;height:0.9px;background:#363534;"></div>
<div class="t" style="left:535.90px;top:202.59px;font-size:8.68px;color:#f2f0ed;transform:scaleX(0.855);transform-origin:0 0;-webkit-text-stroke:0.2px #f2f0ed;">Settings</div>
<div class="t" style="left:535.90px;top:218.28px;font-size:8.43px;color:#f2f0ed;transform:scaleX(0.855);transform-origin:0 0;-webkit-text-stroke:0.2px #f2f0ed;">Manage account</div>
<div class="t" style="left:535.90px;top:233.93px;font-size:8.27px;color:#f2f0ed;transform:scaleX(0.855);transform-origin:0 0;-webkit-text-stroke:0.2px #f2f0ed;">Automations</div>
<div class="t" style="left:535.90px;top:249.41px;font-size:8.64px;color:#f2f0ed;transform:scaleX(0.855);transform-origin:0 0;-webkit-text-stroke:0.2px #f2f0ed;">Install desktop app</div>
<div class="t" style="left:535.90px;top:265.11px;font-size:8.35px;color:#f2f0ed;transform:scaleX(0.855);transform-origin:0 0;-webkit-text-stroke:0.2px #f2f0ed;">Theme</div>
<div class="t" style="left:535.90px;top:280.67px;font-size:8.45px;color:#f2f0ed;transform:scaleX(0.855);transform-origin:0 0;-webkit-text-stroke:0.2px #f2f0ed;">Log out</div>
<div class="a" style="left:528.6px;top:296.8px;width:130.7px;height:0.9px;background:#363534;"></div>
<div class="t" style="left:551.40px;top:304.61px;font-size:8.63px;color:#f2f0ed;transform:scaleX(0.855);transform-origin:0 0;-webkit-text-stroke:0.2px #f2f0ed;">English (United States)</div>
<div class="a" style="left:528.6px;top:321px;width:130.7px;height:0.9px;background:#363534;"></div>
<div class="t" style="left:551.40px;top:328.51px;font-size:8.64px;color:#f2f0ed;transform:scaleX(0.855);transform-origin:0 0;-webkit-text-stroke:0.2px #f2f0ed;">Add team account</div>
<div class="a" style="left:0px;top:402px;width:750px;height:20px;background:#1a2846;"></div>
<div class="a" style="left:23px;top:402px;width:141px;height:20px;background:#3b3b3b;"></div>
<div class="a" style="left:286px;top:402px;width:24px;height:20px;background:#39445e;"></div>
<svg width="750" height="422" style="left:0;top:0">
 <g fill="#fff"><path d="M7.3,408.6 l3.9,-0.6 v4 h-3.9z M11.9,407.9 l4.4,-0.65 v4.75 h-4.4z M7.3,412.6 h3.9 v4 l-3.9,-0.6z M11.9,412.6 h4.4 v4.75 l-4.4,-0.65z"/></g>
 <circle cx="34" cy="410.8" r="2.6" stroke="#d8d8d8" stroke-width="0.8" fill="none"/><path d="M32.1,412.7 l-2.8,2.8" stroke="#d8d8d8" stroke-width="0.9"/>
 <path d="M128,419.6 h25 v2.4 h-25z" fill="#c4b8dc"/>
 <path d="M134.6,410.6 h2.4 v3.6 l2.6,5.2 h-7.6 l2.6,-5.2z" fill="#5a6a78" stroke="#d6dde4" stroke-width="0.5"/>
 <path d="M133.3,416.8 h5 l1.2,2.5 h-7.4z" fill="#3ec83e"/>
 <path d="M141.2,414.6 l4.6,3.2" stroke="#3a9ee8" stroke-width="1.3" stroke-linecap="round"/>
 <circle cx="148.6" cy="411.6" r="2.3" fill="#e9d8ea"/><path d="M147.4,413.5 l1.6,4.5" stroke="#9a8cbf" stroke-width="1"/>
 <path d="M151.2,422 v-4 q-0.2,-2.2 -2,-2.6 l0.6,-1.2 q2,0.6 3,1.6 q0.4,-3 1.4,-4.4 q-1.6,-1.2 -1.2,-3.6 q0.6,-2.6 3.2,-2.4 q2.4,0.3 2.6,2.6 q1.4,0.8 1.8,2.8 q-0.8,0 -1.6,-0.8 q2.4,2.2 2.6,6.6 l0.3,5.4z" fill="#9d8fc2"/>
 <g stroke="#e8e8e8" stroke-width="0.8" fill="none"><rect x="173" y="408.8" width="5" height="5.8"/><path d="M171.2,408.8 v5.8 M179.8,408.8 v5.8"/></g>
 <path d="M194.8,408 h4 l1,1 h6.2 v8.2 h-11.2z" fill="#f5c242"/><rect x="194.8" y="411" width="11.2" height="3" fill="#3b8de6"/><rect x="194.8" y="414" width="11.2" height="3.2" fill="#ffd966"/>
 <path d="M219,414.5 q3,-6 9.5,-6.5 q-2,2.5 -5,3.5 q3,0 5,-1 q-3,5 -9.5,4z" fill="#2ea0e6"/>
 <rect x="247" y="407" width="9" height="8" rx="0.8" fill="#2a78d0"/><rect x="242.8" y="409" width="7" height="7" fill="#0f5db5"/>
 <text x="246.3" y="414.6" font-size="5.5" font-weight="700" fill="#fff" text-anchor="middle" font-family="Liberation Sans">O</text>
 <path d="M249,413.5 h8 v5 h-8z" fill="#f0c27a"/><path d="M249,413.5 l4,2.7 l4,-2.7" stroke="#c89040" stroke-width="0.6" fill="none"/>
 <rect x="268" y="406.7" width="11.3" height="11.3" fill="#0d62f6"/>
<path transform="translate(269.95,408.93) scale(0.1823,0.1823)" d="M12 0 L0 7.7 L8.3 14.3 L20.3 6.9z M0 20.8 L12 28.5 L20.3 21.6 L8.3 14.3z M20.3 21.6 L28.6 28.5 L40.6 20.8 L32.3 14.3z M40.6 7.7 L28.6 0 L20.3 6.9 L32.3 14.3z M20.4 23.1 L12 30 L8.4 27.7 V30.3 L20.4 37.5 L32.4 30.3 V27.7 L28.8 30z" fill="#fff"/>
 <circle cx="297.8" cy="412" r="6" fill="#db4437"/><path d="M297.8,412 l-5.2,-3 a6,6 0 0 0 2.2,8.2z" fill="#0f9d58"/><path d="M297.8,412 l3,5.2 a6,6 0 0 0 2.2,-8.2z" fill="#f4b400"/><circle cx="297.8" cy="412" r="2.6" fill="#fff"/><circle cx="297.8" cy="412" r="2" fill="#4285f4"/>
 <circle cx="302" cy="416.5" r="2.6" fill="#2a6bd8" stroke="#39445e" stroke-width="0.6"/>
 <rect x="316" y="406.5" width="11.3" height="11.3" rx="1" fill="#b11313"/><path d="M318.5,415.5 q3,-7 3.3,-7 q0.6,0 3.5,6 q-4,-1.5 -6.8,1z" stroke="#fff" stroke-width="0.8" fill="none"/>
 <g fill="#8ab4f8"><rect x="191" y="421" width="19.5" height="1"/><rect x="239.2" y="421" width="20.4" height="1"/><rect x="286" y="421" width="24" height="1"/><rect x="312.4" y="421" width="20.4" height="1"/></g>
 <rect x="575.2" y="406.5" width="5.2" height="10.5" rx="0.8" fill="#fff"/><rect x="575.2" y="406.5" width="2.6" height="10.5" fill="#1d428a"/><rect x="577.8" y="406.5" width="2.6" height="10.5" fill="#c8102e"/><path d="M577.8,408 q1,2 -0.5,4 q1,2 0,4" stroke="#fff" stroke-width="0.8" fill="none"/>
 <path d="M647.6,414 l3.2,-3.4 l3.2,3.4" stroke="#e8e8e8" stroke-width="0.95" fill="none"/>
 <rect x="658.5" y="409.3" width="7" height="4.4" fill="#e0e0e0"/><rect x="657.5" y="410.3" width="1" height="2.4" fill="#e0e0e0"/>
 <g stroke="#b8b8b8" stroke-width="0.7" fill="none"><path d="M671,415 a6,6 0 0 1 6,-6"/><path d="M673,415 a4,4 0 0 1 4,-4"/><path d="M675,415 a2,2 0 0 1 2,-2"/></g>
 <path d="M681.5,410.8 h1.5 l2,-2 v7 l-2,-2 h-1.5z" stroke="#e0e0e0" stroke-width="0.7" fill="none"/><path d="M686.5,410.5 q1,1.5 0,3 M687.8,409.3 q2,2.7 0,5.4" stroke="#e0e0e0" stroke-width="0.6" fill="none"/>
 <path d="M729.7,408 h7.8 v6.7 h-5 l-2.8,2z" fill="#e8e8e8"/>
 <circle cx="737.9" cy="415.6" r="4.6" fill="#1a2846"/><circle cx="737.9" cy="415.6" r="4" fill="#2b2b2b" stroke="#6a6a6a" stroke-width="0.5"/>
</svg>
<div class="t" style="left:43.30px;top:407.19px;font-size:8.11px;color:#d6d6d6;transform:scaleX(0.893);transform-origin:0 0;">Type here to search</div>
<div class="t" style="left:587.00px;top:407.39px;font-size:8.10px;color:#ffffff;transform:scaleX(0.909);transform-origin:0 0;">Video highlight</div>
<div class="t" style="left:695.40px;top:402.89px;font-size:6.68px;color:#ffffff;transform:scaleX(0.893);transform-origin:0 0;">10:35 AM</div>
<div class="t" style="left:694.00px;top:411.80px;font-size:6.91px;color:#ffffff;transform:scaleX(0.893);transform-origin:0 0;">2/11/2025</div>
<div class="t" style="left:734.60px;top:411.13px;font-size:5.40px;color:#ffffff;">26</div>
</body></html>
